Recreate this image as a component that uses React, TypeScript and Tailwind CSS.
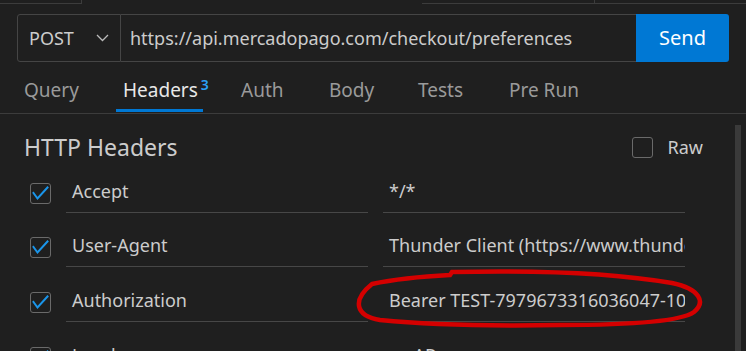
import React from "react";

const font = { fontFamily: '"Noto Sans", "Open Sans", sans-serif' };

function Check({ checked }: { checked: boolean }) {
  return (
    <div className="w-[21px] h-[21px] rounded-[3px] border border-[#6a6a6a] flex items-center justify-center shrink-0">
      {checked && (
        <svg width="21" height="21" viewBox="0 0 21 21" className="-m-px">
          <polyline points="3.5,10 7.5,15.5 17.5,4.5" fill="none" stroke="#1a95ea" strokeWidth="2" strokeLinecap="square" />
        </svg>
      )}
    </div>
  );
}

function Row({ k, v, h, checked = true }: { k: string; v: string; h: string; checked?: boolean }) {
  return (
    <div className={`flex items-start ${h}`}>
      <div className="ml-[30px] mt-[3px]">
        <Check checked={checked} />
      </div>
      <div className="ml-[15px] w-[302px] h-[33px] border-b border-[#474747] pl-[6px] text-[18px] leading-[23px] text-[#cccccc] whitespace-nowrap overflow-hidden">
        {k}
      </div>
      <div className="ml-[15px] w-[302px] h-[33px] border-b border-[#474747] pl-[6px] text-[18px] leading-[23px] text-[#cccccc] whitespace-nowrap overflow-hidden">
        {v}
      </div>
    </div>
  );
}

export default function App() {
  const tabs: { label: string; w: string; active?: boolean; sup?: string }[] = [
    { label: "Query", w: "w-[99px]" },
    { label: "Headers", w: "w-[87px]", active: true, sup: "3" },
    { label: "Auth", w: "w-[88px] ml-[31px]" },
    { label: "Body", w: "w-[89px]" },
    { label: "Tests", w: "w-[91px]" },
    { label: "Pre Run", w: "w-[100px]" },
  ];
  return (
    <div className="relative w-[746px] h-[351px] overflow-hidden bg-[#1f1f1f]" style={font}>
      {/* top strip */}
      <div className="flex h-[4px]">
        <div className="w-[82px] h-[4px] border-b border-r border-[#3c3c3c]" />
        <div className="ml-[340px] w-[173px] h-[4px] border-b border-r border-[#3c3c3c]" />
        <div className="flex-1 h-[4px] border-b border-[#3c3c3c]" />
      </div>

      {/* URL bar */}
      <div className="mt-[10px] ml-[17px] mr-[17px] flex h-[48px]">
        <div className="w-[104px] h-full border border-[#454545] rounded-l-[3px] flex items-center pl-[11px] pr-[11px] justify-between">
          <span className="text-[18px] text-[#cccccc]">POST</span>
          <svg width="13" height="8" viewBox="0 0 13 8">
            <polyline points="1,1 6.5,6.5 12,1" fill="none" stroke="#bbbbbb" strokeWidth="1.3" />
          </svg>
        </div>
        <div className="flex-1 h-full border-y border-[#454545] flex items-center pl-[9px] text-[18px] text-[#cccccc] whitespace-nowrap overflow-hidden">
          https://api.mercadopago.com/checkout/preferences
        </div>
        <div className="w-[93px] h-full bg-[#0078d4] rounded-r-[3px] flex items-center justify-center text-[20px] text-white">
          Send
        </div>
      </div>

      {/* tabs */}
      <div className="h-[52px] border-b border-[#3c3c3c] flex pl-[17px]">
        {tabs.map((t) => (
          <div
            key={t.label}
            className={`${t.w} h-full pl-[7px] pt-[6px] flex items-center relative text-[19px] whitespace-nowrap ${
              t.active ? "text-[#e8e8e8]" : "text-[#9a9a9a]"
            }`}
          >
            <span>{t.label}</span>
            {t.sup && <span className="ml-[3px] -mt-[12px] text-[14px] font-semibold text-[#2aa0f5]">{t.sup}</span>}
            {t.active && <div className="absolute left-0 right-0 bottom-[1px] h-[3px] bg-[#0078d4]" />}
          </div>
        ))}
      </div>

      {/* title */}
      <div className="h-[66px] flex items-center pl-[24px]">
        <span className="text-[23px] text-[#cccccc]">HTTP Headers</span>
        <div className="ml-auto flex items-center mr-[43px]">
          <Check checked={false} />
          <span className="ml-[15px] text-[18px] text-[#cccccc]">Raw</span>
        </div>
      </div>

      <Row h="h-[54px]" k="Accept" v="*/*" />
      <Row h="h-[55px]" k="User-Agent" v="Thunder Client (https://www.thunderclient.com)" />
      <Row h="h-[55px]" k="Authorization" v="Bearer TEST-7979673316036047-102915-abcdef" />
      <Row h="h-[55px]" k="Locale" v="es-AR" />

      {/* scrollbar */}
      <div className="absolute left-[735px] top-[125px] w-[6px] bottom-0 bg-[#3a3a3a]" />

      {/* red annotation */}
      <svg className="absolute inset-0 pointer-events-none" width="746" height="351" viewBox="0 0 746 351">
        <path
          d="M 372 284 C 400 278, 430 276, 450 275 L 452 272 C 540 270, 620 274, 672 283 C 700 289, 706 302, 694 312 C 680 322, 620 325, 560 325 C 500 326, 430 325, 380 320 C 355 316, 352 300, 372 284 Z"
          fill="none"
          stroke="#d40000"
          strokeWidth="4.5"
        />
      </svg>
    </div>
  );
}
